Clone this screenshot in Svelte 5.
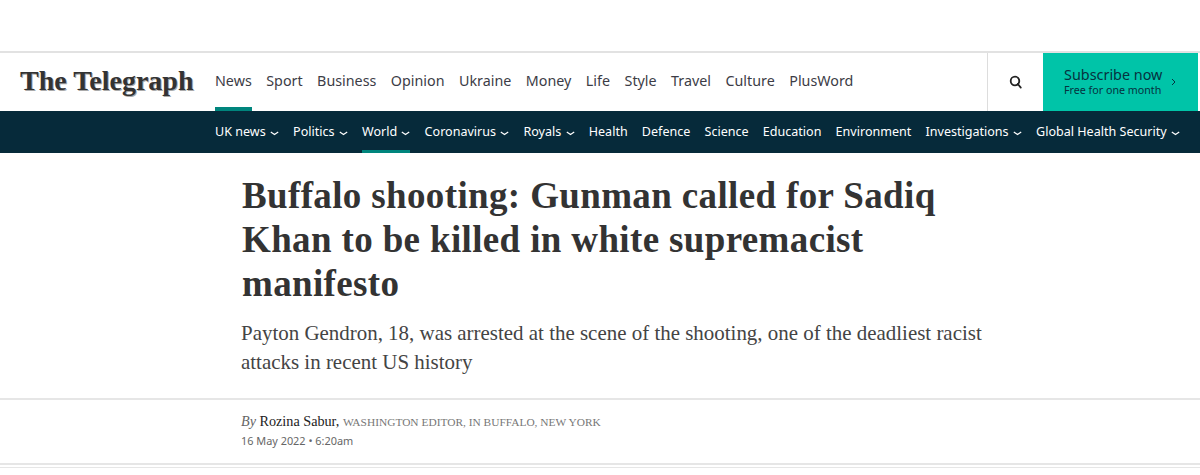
<script lang="ts">
  const primary = ['News', 'Sport', 'Business', 'Opinion', 'Ukraine', 'Money', 'Life', 'Style', 'Travel', 'Culture', 'PlusWord'];
  const secondary = [
    { label: 'UK news', menu: true },
    { label: 'Politics', menu: true },
    { label: 'World', menu: true, active: true },
    { label: 'Coronavirus', menu: true },
    { label: 'Royals', menu: true },
    { label: 'Health' },
    { label: 'Defence' },
    { label: 'Science' },
    { label: 'Education' },
    { label: 'Environment' },
    { label: 'Investigations', menu: true },
    { label: 'Global Health Security', menu: true }
  ];
</script>

<div class="page">
  <header class="masthead">
    <div class="logo">The Telegraph</div>
    <nav class="primary">
      {#each primary as item, i}
        <a class:active={i === 0} href="#top">{item}</a>
      {/each}
    </nav>
    <button type="button" class="search" aria-label="Search">
      <svg width="14" height="14" viewBox="0 0 14 14" fill="none" stroke="#222" stroke-width="1.8">
        <circle cx="6" cy="6" r="4.3" />
        <path d="M8.8 9l3 3.6" stroke-linecap="round" />
      </svg>
    </button>
    <a class="subscribe" href="#top">
      <span class="sub-text">
        <span class="sub-main">Subscribe now</span>
        <span class="sub-note">Free for one month</span>
      </span>
      <svg width="5" height="8" viewBox="0 0 5 8" fill="none" stroke="#06323f" stroke-width="1">
        <path d="M1 1l3 3-3 3" />
      </svg>
    </a>
  </header>

  <nav class="secondary">
    {#each secondary as item}
      <a class:active={item.active} href="#top">
        {item.label}
        {#if item.menu}
          <svg width="9" height="5" viewBox="0 0 9 5" fill="none" stroke="#fff" stroke-width="1.2">
            <path d="M.8 1l3.7 2.6L8.2 1" />
          </svg>
        {/if}
      </a>
    {/each}
  </nav>

  <section class="headline">
    <h1>Buffalo shooting: Gunman called for Sadiq Khan to be killed in white supremacist manifesto</h1>
    <p>Payton Gendron, 18, was arrested at the scene of the shooting, one of the deadliest racist attacks in recent US history</p>
  </section>

  <section class="byline">
    <div class="author"><i>By</i> <b>Rozina Sabur,</b> <span>WASHINGTON EDITOR, IN BUFFALO, NEW YORK</span></div>
    <div class="date">16 May 2022 • 6:20am</div>
  </section>
  <div class="rule"></div>
</div>

<style>
  :global(body) {
    background: #fff;
    overflow: hidden;
  }

  .page {
    height: 475px;
    padding-top: 51px;
    box-sizing: border-box;
    color: #333;
  }

  .masthead {
    display: flex;
    height: 60px;
    box-sizing: border-box;
    border-top: 2px solid #e2e2e2;
    padding-right: 2px;
    align-items: stretch;
  }

  .logo {
    width: 215px;
    padding-left: 20px;
    box-sizing: border-box;
    font: bold 28px/56px "Liberation Serif", serif;
    color: #333;
    text-shadow: 1px 1px 0 #aaa;
    white-space: nowrap;
  }

  .primary {
    display: flex;
    gap: 14.5px;
    flex: 1;
  }

  .primary a {
    color: #3c3c46;
    text-decoration: none;
    font: 14.3px/55px "Noto Sans", sans-serif;
    height: 58px;
    box-sizing: border-box;
  }

  .primary a.active {
    border-bottom: 4px solid #00857d;
  }

  .search {
    width: 56px;
    background: #fff;
    border: 0;
    border-left: 1px solid #ddd;
    padding: 0;
    display: flex;
    align-items: center;
    justify-content: center;
  }

  .subscribe {
    width: 155px;
    background: #00c4a8;
    color: #06323f;
    text-decoration: none;
    display: flex;
    align-items: center;
    padding-left: 21px;
    box-sizing: border-box;
    gap: 9px;
  }

  .sub-text {
    display: flex;
    flex-direction: column;
    padding-bottom: 2px;
    font-family: "Noto Sans", sans-serif;
  }

  .sub-main {
    font-size: 14.4px;
    line-height: 17px;
  }

  .sub-note {
    font-size: 10.7px;
    line-height: 14px;
  }

  .secondary {
    height: 42px;
    background: #062a3a;
    display: flex;
    gap: 14.2px;
    padding-left: 215px;
  }

  .secondary a {
    color: #fff;
    text-decoration: none;
    font: 12.55px/41px "Noto Sans", sans-serif;
    height: 42px;
    box-sizing: border-box;
    white-space: nowrap;
  }

  .secondary a.active {
    border-bottom: 3px solid #00857d;
  }

  .secondary svg {
    margin-left: 1px;
    vertical-align: 0;
  }

  .headline {
    padding: 21px 0 0 241px;
    height: 247px;
    box-sizing: border-box;
    border-bottom: 2px solid #e6e6e6;
  }

  h1 {
    margin: 0 0 0 1px;
    width: 720px;
    font: bold 37px/44px "Liberation Serif", serif;
    letter-spacing: 0.36px;
    color: #333;
  }

  p {
    margin: 13px 0 0;
    width: 760px;
    font: 20.95px/29px "Liberation Serif", serif;
    color: #444;
  }

  .byline {
    padding: 12px 0 0 241px;
    height: 65px;
    box-sizing: border-box;
    border-bottom: 2px solid #e6e6e6;
  }

  .author {
    font: 14.2px/18px "Liberation Serif", serif;
    color: #222;
  }

  .author i {
    color: #666;
  }

  .author b {
    font-weight: normal;
  }

  .author span {
    font-size: 11.4px;
    color: #777;
  }

  .date {
    font: 10.9px/18px "Noto Sans", sans-serif;
    color: #666;
    margin-top: 1px;
  }

  .rule {
    height: 1px;
    margin-top: 2px;
    background: #e6e6e6;
  }
</style>
